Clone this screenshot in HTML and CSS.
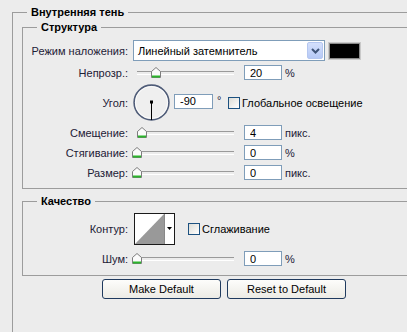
FILE: index.html
```html
<!DOCTYPE html>
<html lang="ru">
<head>
<meta charset="utf-8">
<title>Внутренняя тень</title>
<link rel="stylesheet" href="styles.css">
</head>
<body>
<div class="dialog">
  <fieldset class="group outer">
    <legend>Внутренняя тень</legend>

    <fieldset class="group inner structure">
      <legend>Структура</legend>

      <div class="row row-blend">
        <label class="lbl">Режим наложения:</label>
        <div class="select">
          <span class="select-text">Линейный затемнитель</span>
          <span class="select-btn">
            <svg width="9" height="6" viewBox="0 0 9 6"><path d="M1 1 L4.5 4.5 L8 1" fill="none" stroke="#3f5478" stroke-width="2"/></svg>
          </span>
        </div>
        <span class="swatch"></span>
      </div>

      <div class="row">
        <label class="lbl">Непрозр.:</label>
        <div class="slider"><span class="thumb" style="left:calc(4px + 20% * 0.96 - 5px)"><svg width="10" height="11" viewBox="0 0 10 11"><path d="M0.5 4.5 L5 0.5 L9.5 4.5 L9.5 10.5 L0.5 10.5 Z" fill="#fbfbfb" stroke="#7d7d7d"/><rect x="1" y="8.5" width="8" height="2" fill="#2bb52b"/></svg></span></div>
        <input class="num" type="text" value="20">
        <span class="unit">%</span>
      </div>

      <div class="row row-angle">
        <label class="lbl">Угол:</label>
        <svg class="dial" width="37" height="37" viewBox="0 0 37 37">
          <circle cx="18.5" cy="18.5" r="17.4" fill="#efefef" stroke="#4f5c78" stroke-width="1.6"/>
          <circle cx="18.5" cy="18.5" r="16.1" fill="none" stroke="#ffffff" stroke-width="0.8"/>
          <line x1="18.5" y1="18" x2="18.5" y2="36" stroke="#000" stroke-width="1"/>
          <rect x="17" y="16.5" width="3" height="3" fill="#000"/>
        </svg>
        <input class="num num-angle" type="text" value="-90">
        <span class="deg">°</span>
        <span class="check"></span>
        <span class="check-text">Глобальное освещение</span>
      </div>

      <div class="row">
        <label class="lbl">Смещение:</label>
        <div class="slider"><span class="thumb" style="left:calc(4px + 5px - 5px)"><svg width="10" height="11" viewBox="0 0 10 11"><path d="M0.5 4.5 L5 0.5 L9.5 4.5 L9.5 10.5 L0.5 10.5 Z" fill="#fbfbfb" stroke="#7d7d7d"/><rect x="1" y="8.5" width="8" height="2" fill="#2bb52b"/></svg></span></div>
        <input class="num" type="text" value="4">
        <span class="unit">пикс.</span>
      </div>

      <div class="row">
        <label class="lbl">Стягивание:</label>
        <div class="slider"><span class="thumb" style="left:calc(4px - 5px)"><svg width="10" height="11" viewBox="0 0 10 11"><path d="M0.5 4.5 L5 0.5 L9.5 4.5 L9.5 10.5 L0.5 10.5 Z" fill="#fbfbfb" stroke="#7d7d7d"/><rect x="1" y="8.5" width="8" height="2" fill="#2bb52b"/></svg></span></div>
        <input class="num" type="text" value="0">
        <span class="unit">%</span>
      </div>

      <div class="row">
        <label class="lbl">Размер:</label>
        <div class="slider"><span class="thumb" style="left:calc(4px - 5px)"><svg width="10" height="11" viewBox="0 0 10 11"><path d="M0.5 4.5 L5 0.5 L9.5 4.5 L9.5 10.5 L0.5 10.5 Z" fill="#fbfbfb" stroke="#7d7d7d"/><rect x="1" y="8.5" width="8" height="2" fill="#2bb52b"/></svg></span></div>
        <input class="num" type="text" value="0">
        <span class="unit">пикс.</span>
      </div>
    </fieldset>

    <fieldset class="group inner quality">
      <legend>Качество</legend>

      <div class="row row-contour">
        <label class="lbl">Контур:</label>
        <div class="contour">
          <svg class="contour-preview" width="29" height="30" viewBox="0 0 29 30"><polygon points="0,30 29,0 29,30" fill="#999"/></svg>
          <span class="contour-btn"><svg width="5" height="3" viewBox="0 0 5 3"><polygon points="0,0 5,0 2.5,3" fill="#000"/></svg></span>
        </div>
        <span class="check check-smooth"></span>
        <span class="check-text">Сглаживание</span>
      </div>

      <div class="row">
        <label class="lbl">Шум:</label>
        <div class="slider"><span class="thumb" style="left:calc(4px - 5px)"><svg width="10" height="11" viewBox="0 0 10 11"><path d="M0.5 4.5 L5 0.5 L9.5 4.5 L9.5 10.5 L0.5 10.5 Z" fill="#fbfbfb" stroke="#7d7d7d"/><rect x="1" y="8.5" width="8" height="2" fill="#2bb52b"/></svg></span></div>
        <input class="num" type="text" value="0">
        <span class="unit">%</span>
      </div>
    </fieldset>

    <div class="buttons">
      <button class="btn" type="button">Make Default</button>
      <button class="btn" type="button">Reset to Default</button>
    </div>
  </fieldset>
</div>
</body>
</html>
```

FILE: styles.css
```css
*{margin:0; padding:0; box-sizing:border-box;}
html,body{
	width:407px;
	height:332px;
	overflow:hidden;
	background:#ececec;
}
body{
	font-family:"Liberation Sans", Arial, sans-serif;
	font-size:11px;
	color:#1c2036;
}
.dialog{
	padding-left:12px;
}
/*****************************************/
.group{
	border:none;
	border-top:1px solid #9c9c9c;
	border-left:1px solid #9c9c9c;
	min-width:0;
}
.group legend{
	margin-left:14px;
	padding:0 4px;
	font-weight:bold;
	font-size:11px;
	line-height:13px;
	color:#000;
}
.outer{
	margin-top:6px;
	width:395px;
	height:326px;
}
.inner{
	margin-left:9px;
	border-bottom:1px solid #9c9c9c;
	width:385px;
}
.structure{
	margin-top:2px;
	padding:6px 0 7px 0;
	display:flex;
	flex-direction:column;
	gap:3px;
}
.quality{
	margin-top:6px;
	padding:5px 0 8px 0;
	display:flex;
	flex-direction:column;
	gap:5px;
}
/*****************************************/
.row{
	display:flex;
	align-items:center;
	height:17px;
}
.row-blend{height:21px;}
.row-angle{height:37px;}
.row-contour{height:32px;}
.lbl{
	width:105px;
	margin-right:5px;
	text-align:right;
	white-space:nowrap;
}
.select{
	display:flex;
	align-items:center;
	width:192px;
	height:21px;
	background:#fff;
	border:1px solid #7f9db9;
	padding:1px;
}
.select-text{
	flex:1;
	padding-left:3px;
	color:#000;
}
.select-btn{
	display:flex;
	align-items:center;
	justify-content:center;
	width:16px;
	height:17px;
	border:1px solid #b5c7f0;
	border-radius:2px;
	background:linear-gradient(#d4e0fc, #b6c9f6);
}
.swatch{
	width:31px;
	height:16px;
	margin-left:4px;
	background:#000;
	border:1px solid #8a8a8a;
	box-shadow:0 0 0 1px #c9c9c9;
}
.slider{
	position:relative;
	width:101px;
	height:11px;
}
.slider:before{
	content:"";
	display:block;
	margin:4px 0 0 4px;
	height:2px;
	border-top:1px solid #9a9a9a;
	border-bottom:1px solid #fff;
}
.thumb{
	position:absolute;
	top:0;
	width:10px;
	height:11px;
	line-height:0;
}
.num{
	width:38px;
	height:15px;
	margin-left:10px;
	border:1px solid #7f9db9;
	background:#fff;
	font-family:"Liberation Sans", Arial, sans-serif;
	font-size:11px;
	color:#000;
	padding:0 0 0 5px;
	outline:none;
}
.unit{
	margin-left:3px;
	color:#1c2036;
}
.dial{
	flex:none;
	width:37px;
	height:37px;
}
.num-angle{
	width:39px;
	margin-left:4px;
	margin-top:-3px;
}
.deg{
	margin:-6px 0 0 4px;
	width:11px;
}
.check{
	width:12px;
	height:12px;
	border:1px solid #1c5180;
	background:linear-gradient(135deg, #dcdcd6, #fff);
	margin-right:2px;
}
.check-text{color:#000;}
.contour{
	display:flex;
	width:41px;
	height:32px;
	margin-left:1px;
	border:1px solid #1a1a1a;
	background:#fff;
}
.contour-preview{
	display:block;
	border-right:1px solid #888;
	width:30px;
	height:30px;
}
.contour-btn{
	flex:1;
	display:flex;
	align-items:center;
	justify-content:center;
	padding-bottom:1px;
}
.check-smooth{margin-left:13px;}
/*****************************************/
.buttons{
	display:flex;
	gap:6px;
	padding-left:89px;
	margin-top:3px;
}
.btn{
	width:119px;
	height:20px;
	border:1px solid #1f3a5e;
	border-radius:3px;
	background:linear-gradient(#fdfdfb, #ecebe5);
	font-family:"Liberation Sans", Arial, sans-serif;
	font-size:11px;
	color:#000;
}
```
